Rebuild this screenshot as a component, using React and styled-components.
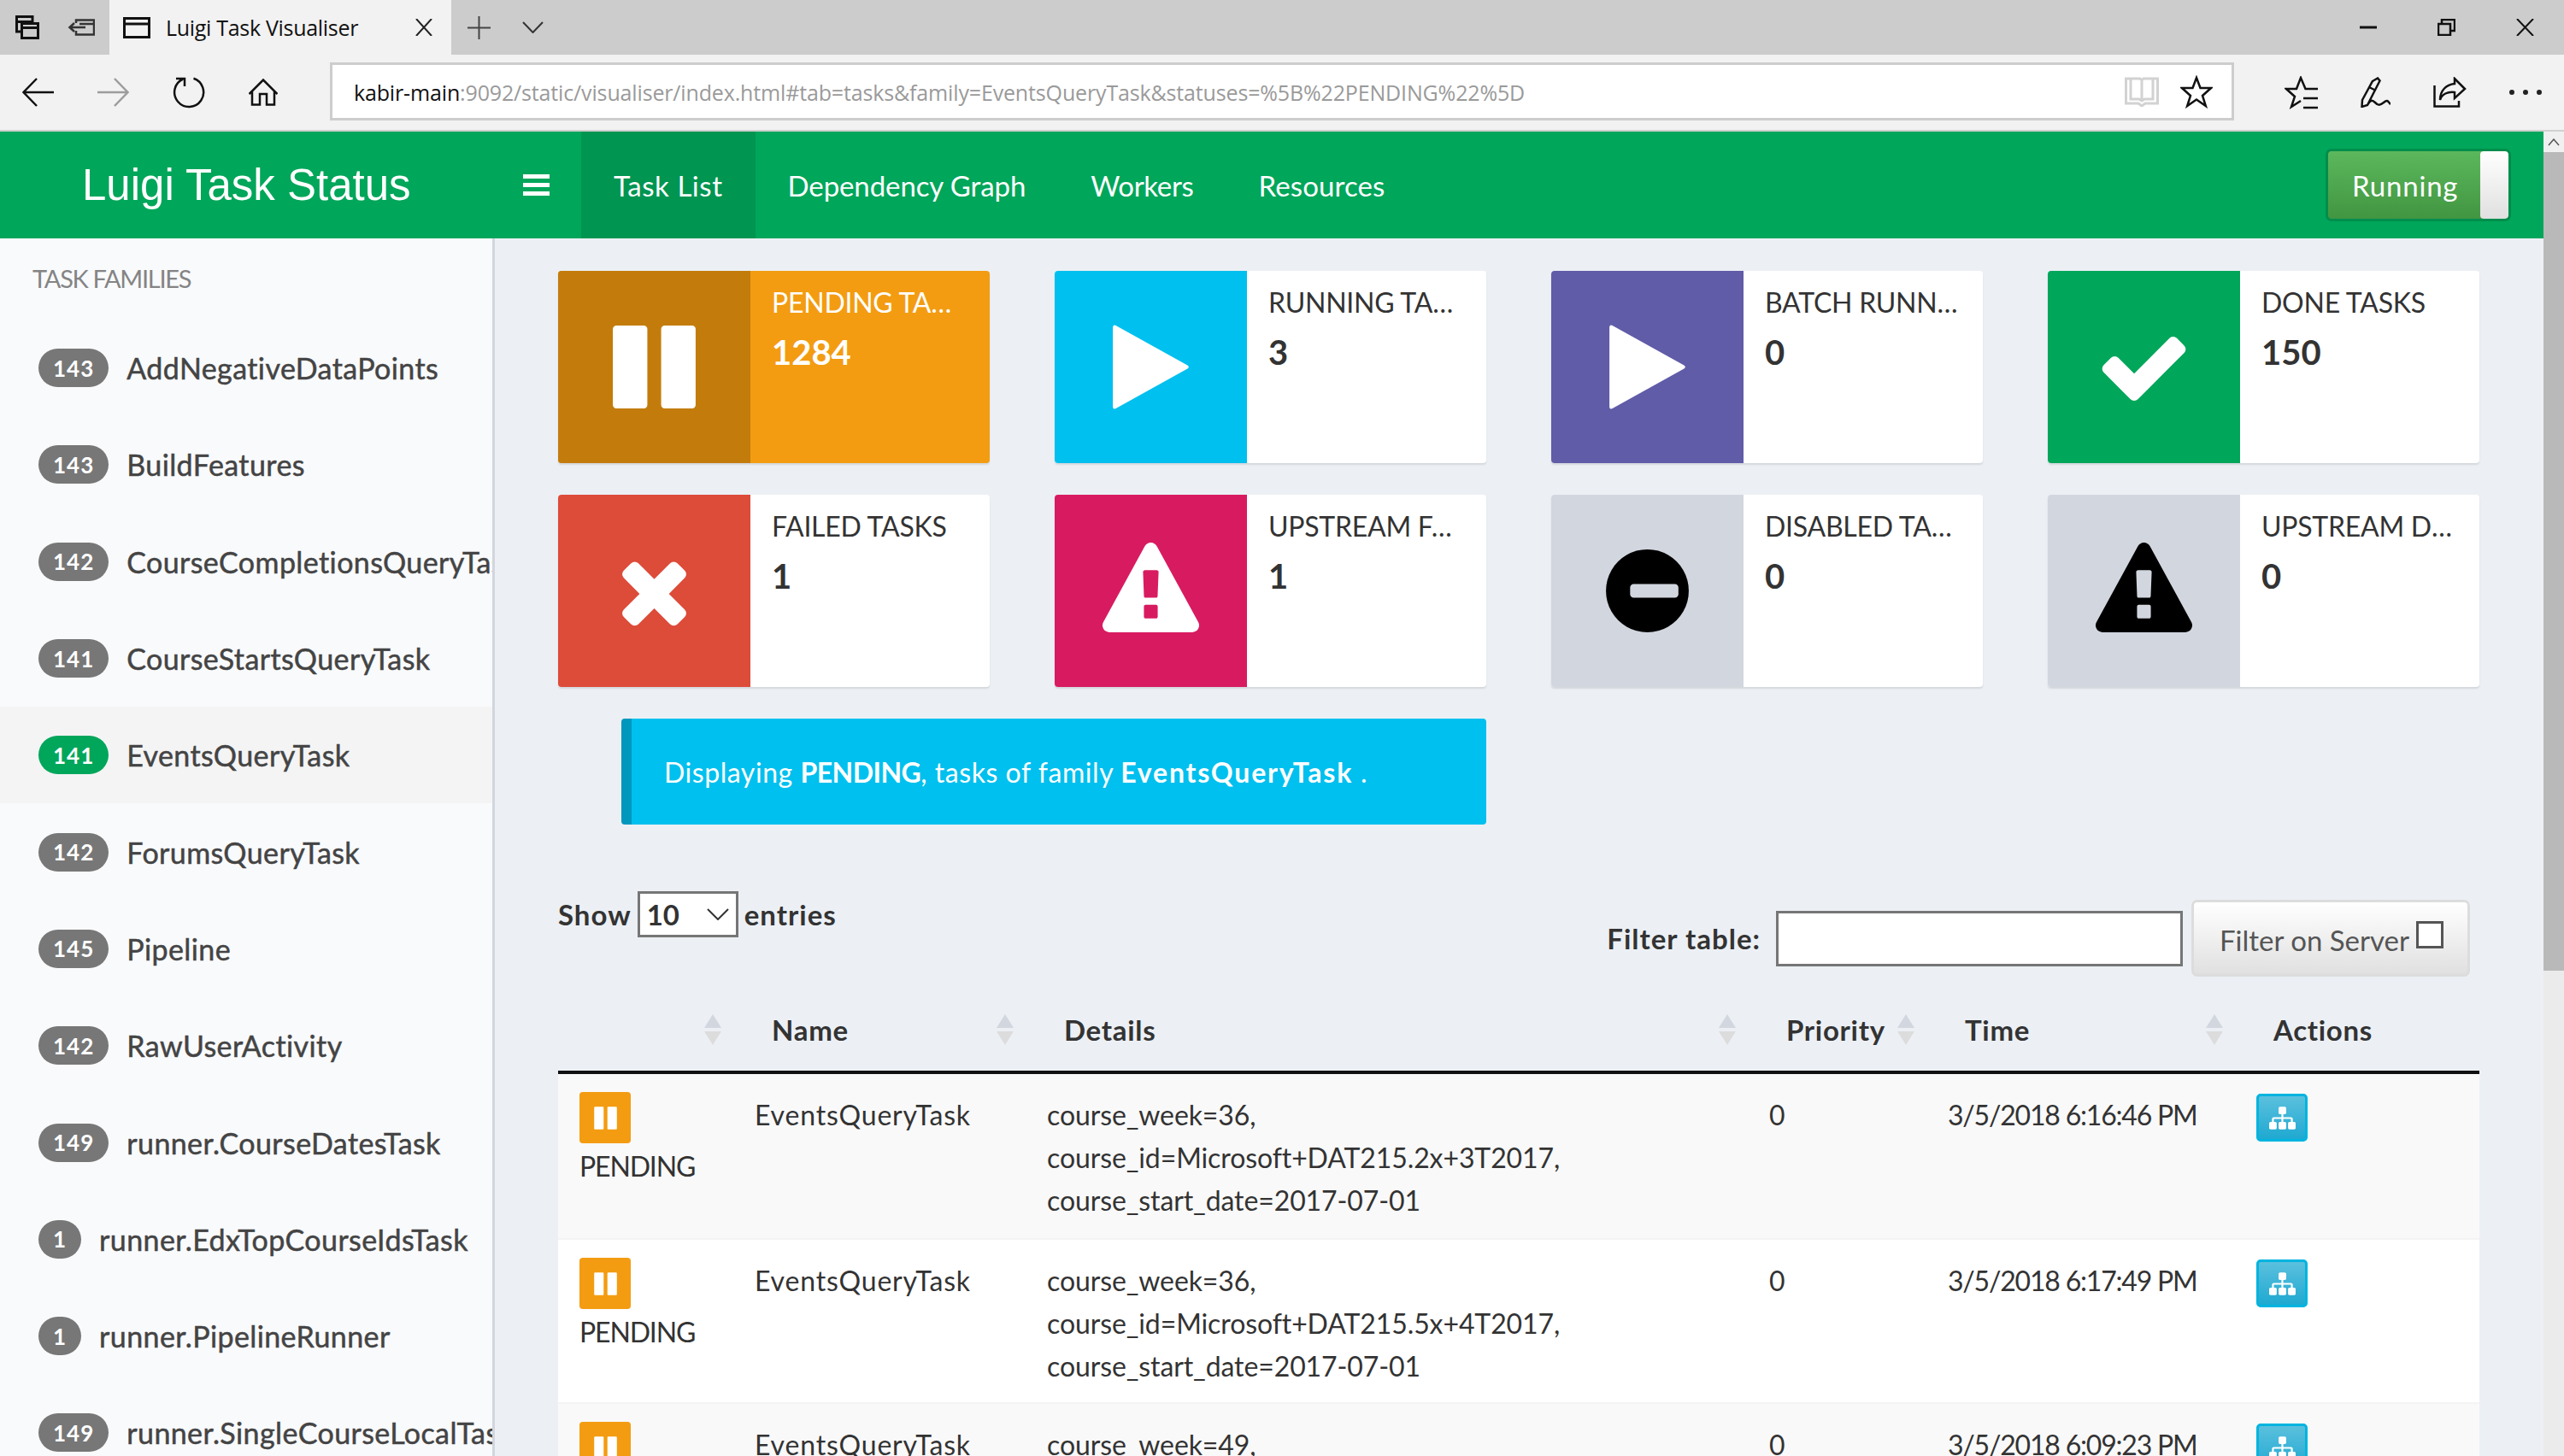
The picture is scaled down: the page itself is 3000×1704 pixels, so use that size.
import styled, { createGlobalStyle } from "styled-components";

const GlobalStyle = createGlobalStyle`
  html, body {
    margin: 0;
    padding: 0;
    background: #ecf0f5;
    overflow: hidden;
  }
  * { box-sizing: border-box; }
`;

const Page = styled.div`
  width: 3000px;
  height: 1704px;
  overflow: hidden;
  display: flex;
  flex-direction: column;
  font-family: "Lato", "Noto Sans", sans-serif;
  color: #333;
`;

/* browser chrome */
const TabStrip = styled.div`
  height: 64px;
  background: #cccccc;
  display: flex;
  align-items: center;
  flex: none;
`;

const StripIcons = styled.div`
  width: 128px;
  display: flex;
  align-items: center;
  gap: 33px;
  padding-left: 18px;
`;

const Tab = styled.div`
  width: 400px;
  height: 64px;
  background: #f2f2f2;
  display: flex;
  align-items: center;
  padding: 0 22px 0 16px;
  font-family: "Open Sans", sans-serif;
  font-size: 25px;
  letter-spacing: -0.3px;
  color: #111;
`;

const TabTitle = styled.span`
  margin-left: 18px;
  flex: 1;
`;

const NewTabIcons = styled.div`
  display: flex;
  align-items: center;
  gap: 37px;
  margin-left: 19px;
`;

const WindowButtons = styled.div`
  margin-left: auto;
  display: flex;
  align-items: center;
  gap: 71px;
  padding-right: 35px;
`;

const Toolbar = styled.div`
  height: 90px;
  flex: none;
  background: #f2f2f2;
  border-bottom: 2px solid #d0d0d0;
  display: flex;
  align-items: center;
`;

const ToolButtons = styled.div`
  width: 386px;
  display: flex;
  align-items: center;
  gap: 51px;
  padding-left: 26px;
`;

const AddressBar = styled.div`
  width: 2228px;
  height: 68px;
  margin-bottom: 2px;
  background: #fff;
  border: 3px solid #cdcdcd;
  display: flex;
  align-items: center;
  padding: 0 22px 0 25px;
  font-family: "Open Sans", sans-serif;
  font-size: 25px;
  letter-spacing: -0.15px;
  color: #9a9a9a;
  gap: 25px;
`;

const Url = styled.div`
  flex: 1;
  padding-top: 2px;
  white-space: nowrap;
  overflow: hidden;

  b {
    font-weight: 400;
    color: #111;
  }
`;

const ActionButtons = styled.div`
  display: flex;
  align-items: center;
  gap: 50px;
  padding-left: 59px;
`;

/* app frame */
const Frame = styled.div`
  flex: 1;
  min-height: 0;
  display: flex;
`;

const Viewport = styled.div`
  flex: 1;
  min-width: 0;
  display: flex;
  flex-direction: column;
`;

const NavBar = styled.header`
  height: 125px;
  flex: none;
  background: #00a65a;
  display: flex;
  align-items: stretch;
  color: #fff;
`;

const Brand = styled.div`
  width: 612px;
  padding-left: 96px;
  display: flex;
  align-items: center;
  font-family: "Liberation Sans", Arial, sans-serif;
  font-size: 51px;
`;

const Burger = styled.div`
  width: 68px;
  display: flex;
  align-items: center;
`;

const NavLink = styled.a`
  display: flex;
  align-items: center;
  padding: 0 38px;
  font-size: 33px;
  letter-spacing: ${(p) => p.$track}px;
  background: ${(p) => (p.$active ? "#009551" : "transparent")};
`;

const Switch = styled.div`
  margin: 20px 38px 0 auto;
  width: 217px;
  height: 85px;
  border: 3px solid #008d4c;
  border-radius: 7px;
  background: linear-gradient(#5cb85c, #419641);
  display: flex;
  align-items: center;
  justify-content: space-between;
  font-size: 33px;
  letter-spacing: 0.8px;
  padding-left: 28px;
  overflow: hidden;
`;

const SwitchHandle = styled.span`
  width: 33px;
  height: 100%;
  border-radius: 4px;
  background: linear-gradient(#fff, #e0e0e0);
`;

const Body = styled.div`
  flex: 1;
  min-height: 0;
  display: flex;
`;

const Sidebar = styled.aside`
  width: 579px;
  flex: none;
  background: #f9fafc;
  border-right: 3px solid #d2d6de;
  overflow: hidden;
  padding-top: 36px;
`;

const SideLabel = styled.div`
  height: 59px;
  padding-left: 38px;
  line-height: 22px;
  font-size: 29px;
  letter-spacing: -1.3px;
  color: #848484;
`;

const FamilyRow = styled.div`
  height: 113.3px;
  display: flex;
  align-items: center;
  gap: 21px;
  padding-left: 45px;
  background: ${(p) => (p.$active ? "#f4f4f5" : "transparent")};
  white-space: nowrap;
  font-size: 34px;
  letter-spacing: 0.4px;
  color: #444;
  -webkit-text-stroke: 0.5px #444;
`;

const Badge = styled.span`
  flex: none;
  min-width: 50px;
  height: 45px;
  padding: 0 17px;
  border-radius: 23px;
  background: ${(p) => (p.$active ? "#00a65a" : "#777")};
  color: #fff;
  font-size: 26px;
  font-weight: 700;
  letter-spacing: 1px;
  -webkit-text-stroke: 0;
  display: flex;
  align-items: center;
  justify-content: center;
`;

const Main = styled.main`
  flex: 1;
  min-width: 0;
  background: #ecf0f5;
  padding: 38px 75px 0 74px;
  overflow: hidden;
`;

const BoxGrid = styled.div`
  display: grid;
  grid-template-columns: repeat(4, 505px);
  column-gap: 76px;
  row-gap: 37px;
`;

const InfoBox = styled.div`
  height: 225px;
  display: flex;
  border-radius: 4px;
  overflow: hidden;
  background: ${(p) => p.$bg || "#fff"};
  color: ${(p) => p.$fg || "#333"};
  box-shadow: 0 2px 2px rgba(0, 0, 0, 0.1);
`;

const BoxIcon = styled.div`
  width: 225px;
  flex: none;
  background: ${(p) => p.$bg};
  color: ${(p) => p.$fg};
  display: flex;
  align-items: center;
  justify-content: center;
`;

const BoxBody = styled.div`
  flex: 1;
  min-width: 0;
  padding: 16px 28px 0 25px;
`;

const BoxTitle = styled.div`
  font-size: 32px;
  line-height: 42px;
  letter-spacing: -0.25px;
  white-space: nowrap;
  overflow: hidden;
  text-overflow: ellipsis;
`;

const BoxValue = styled.div`
  margin-top: 12px;
  font-size: 40px;
  line-height: 50px;
  font-weight: 700;
`;

const Alert = styled.div`
  grid-column: 1 / span 2;
  margin-left: 74px;
  height: 124px;
  border-left: 12px solid #0097bc;
  border-radius: 4px;
  background: #00c0ef;
  color: #fff;
  padding-left: 38px;
  display: flex;
  align-items: center;
  font-size: 32px;
  letter-spacing: 0.55px;
  white-space: pre;
`;

const Strong = styled.b`
  font-weight: 700;
  letter-spacing: ${(p) => p.$track}px;
`;

const Controls = styled.div`
  margin-top: 78px;
  display: flex;
  justify-content: space-between;
  align-items: flex-start;
`;

const Length = styled.label`
  display: flex;
  align-items: center;
  gap: 7px;
  font-size: 33px;
  font-weight: 700;
  letter-spacing: 1px;
`;

const SelectBox = styled.div`
  width: 118px;
  height: 54px;
  background: #fff;
  border: 3px solid #767676;
  display: flex;
  align-items: center;
  justify-content: space-between;
  padding: 0 8px;
  letter-spacing: 0;
`;

const FilterArea = styled.div`
  margin-top: 10px;
  padding-right: 11px;
  display: flex;
  align-items: center;
`;

const FilterLabel = styled.label`
  font-size: 33px;
  font-weight: 700;
  letter-spacing: 1px;
  margin-right: 18px;
`;

const FilterInput = styled.input`
  width: 476px;
  height: 65px;
  background: #fff;
  border: 3px solid #767676;
  margin-right: 10px;
`;

const FilterButton = styled.div`
  width: 326px;
  height: 90px;
  border: 3px solid #dcdcdc;
  border-radius: 7px;
  background: linear-gradient(#fff, #e0e0e0);
  color: #555;
  font-size: 33px;
  letter-spacing: 0;
  display: flex;
  align-items: center;
  padding: 3px 0 0 30px;
  gap: 8px;
`;

const CheckBox = styled.span`
  width: 32px;
  height: 32px;
  margin-top: -12px;
  background: #fff;
  border: 3px solid #555;
`;

const columns = "205px 342px 845px 209px 361px 286px";

const HeadRow = styled.div`
  display: grid;
  grid-template-columns: ${columns};
  height: 114px;
  padding-top: 14px;
  align-items: center;
  border-bottom: 4px solid #111;
`;

const HeadCell = styled.div`
  display: flex;
  align-items: center;
  justify-content: space-between;
  padding: 0 14px 0 45px;
  font-size: 33px;
  font-weight: 700;
  letter-spacing: 0.7px;
`;

const Row = styled.div`
  display: grid;
  grid-template-columns: ${columns};
  height: ${(p) => (p.$odd ? "194px" : "192px")};
  background: ${(p) => (p.$odd ? "#f9f9f9" : "#fff")};
  border-bottom: 2px solid #f4f4f4;
  font-size: 32px;
  line-height: 50px;
`;

const Cell = styled.div`
  padding: 23px 25px 0;
  letter-spacing: ${(p) => p.$track ?? 0}px;
  white-space: nowrap;
`;

const StatusIcon = styled.div`
  width: 60px;
  height: 60px;
  margin-bottom: 2px;
  border-radius: 4px;
  background: #f39c12;
  color: #fff;
  display: flex;
  align-items: center;
  justify-content: center;
`;

const StatusCell = styled.div`
  padding: 21px 25px 0;
  letter-spacing: -1.15px;
`;

const DepButton = styled.div`
  width: 60px;
  height: 56px;
  border: 3px solid #00b4df;
  border-radius: 5px;
  background: linear-gradient(#5bc0de, #1fa9d1);
  color: #fff;
  display: flex;
  align-items: center;
  justify-content: center;
`;

const Scrollbar = styled.div`
  width: 24px;
  flex: none;
  background: #ebebeb;
  display: flex;
  flex-direction: column;
`;

const ScrollUp = styled.div`
  height: 24px;
  background: #f0f0f0;
  display: flex;
  align-items: center;
  justify-content: center;
`;

const ScrollThumb = styled.div`
  height: 958px;
  background: #b9b9b9;
`;

/* Font Awesome 4 style glyphs, 1792 grid */
const glyphs = {
  pause:
    "M1664 192v1408q0 26-19 45t-45 19h-512q-26 0-45-19t-19-45v-1408q0-26 19-45t45-19h512q26 0 45 19t19 45zm-896 0v1408q0 26-19 45t-45 19h-512q-26 0-45-19t-19-45v-1408q0-26 19-45t45-19h512q26 0 45 19t19 45z",
  play: "M1576 927l-1328 738q-23 13-39.5 3t-16.5-36v-1472q0-26 16.5-36t39.5 3l1328 738q23 13 23 31t-23 31z",
  check:
    "M1671 566q0 40-28 68l-724 724-136 136q-28 28-68 28t-68-28l-136-136-362-362q-28-28-28-68t28-68l136-136q28-28 68-28t68 28l294 295 656-657q28-28 68-28t68 28l136 136q28 28 28 68z",
  times:
    "M1298 1232q0 40-28 68l-136 136q-28 28-68 28t-68-28l-294-294-294 294q-28 28-68 28t-68-28l-136-136q-28-28-28-68t28-68l294-294-294-294q-28-28-28-68t28-68l136-136q28-28 68-28t68 28l294 294 294-294q28-28 68-28t68 28l136 136q28 28 28 68t-28 68l-294 294 294 294q28 28 28 68z",
  warning:
    "M1024 1375v-190q0-14-9.5-23.5t-22.5-9.5h-192q-13 0-22.5 9.5t-9.5 23.5v190q0 14 9.5 23.5t22.5 9.5h192q13 0 22.5-9.5t9.5-23.5zm-2-374l18-459q0-12-10-19-13-11-24-11h-220q-11 0-24 11-10 7-10 21l17 457q0 10 10 16.5t24 6.5h185q14 0 23.5-6.5t10.5-16.5zm-14-934l768 1408q35 63-2 126-17 29-46.5 46t-63.5 17h-1536q-34 0-63.5-17t-46.5-46q-37-63-2-126l768-1408q17-31 47-49t65-18 65 18 47 49z",
  minus:
    "M1344 960v-128q0-26-19-45t-45-19h-768q-26 0-45 19t-19 45v128q0 26 19 45t45 19h768q26 0 45-19t19-45zm192-64q0 209-103 385.5t-279.5 279.5-385.5 103-385.5-103-279.5-279.5-103-385.5 103-385.5 279.5-279.5 385.5-103 385.5 103 279.5 279.5 103 385.5z",
  sitemap:
    "M1792 1248v320q0 40-28 68t-68 28h-320q-40 0-68-28t-28-68v-320q0-40 28-68t68-28h96v-192h-512v192h96q40 0 68 28t28 68v320q0 40-28 68t-68 28h-320q-40 0-68-28t-28-68v-320q0-40 28-68t68-28h96v-192h-512v192h96q40 0 68 28t28 68v320q0 40-28 68t-68 28h-320q-40 0-68-28t-28-68v-320q0-40 28-68t68-28h96v-192q0-52 38-90t90-38h512v-192h-96q-40 0-68-28t-28-68v-320q0-40 28-68t68-28h320q40 0 68 28t28 68v320q0 40-28 68t-68 28h-96v192h512q52 0 90 38t38 90v192h96q40 0 68 28t28 68z",
};

const viewBoxes = { times: "-192 -80 1792 1792", minus: "-128 0 1792 1792" };

function Glyph({ name, size = 113 }) {
  return (
    <svg width={size} height={size} viewBox={viewBoxes[name] || "0 0 1792 1792"} fill="currentColor">
      <path d={glyphs[name]} />
    </svg>
  );
}

/* thin-line browser icon */
function Line({ w, h, color = "#111", sw = 2.5, children }) {
  return (
    <svg width={w} height={h} viewBox={`0 0 ${w} ${h}`} fill="none" stroke={color} strokeWidth={sw}>
      {children}
    </svg>
  );
}

const families = [
  [143, "AddNegativeDataPoints"],
  [143, "BuildFeatures"],
  [142, "CourseCompletionsQueryTask"],
  [141, "CourseStartsQueryTask"],
  [141, "EventsQueryTask", true],
  [142, "ForumsQueryTask"],
  [145, "Pipeline"],
  [142, "RawUserActivity"],
  [149, "runner.CourseDatesTask"],
  [1, "runner.EdxTopCourseIdsTask"],
  [1, "runner.PipelineRunner"],
  [149, "runner.SingleCourseLocalTask"],
];

const boxes = [
  { title: "PENDING TASKS", value: 1284, icon: "pause", iconBg: "#c37c0c", iconFg: "#fff", bg: "#f39c12", fg: "#fff" },
  { title: "RUNNING TASKS", value: 3, icon: "play", iconBg: "#00c0ef", iconFg: "#fff" },
  { title: "BATCH RUNNING TASKS", value: 0, icon: "play", iconBg: "#605ca8", iconFg: "#fff" },
  { title: "DONE TASKS", value: 150, icon: "check", iconBg: "#00a65a", iconFg: "#fff" },
  { title: "FAILED TASKS", value: 1, icon: "times", iconBg: "#dd4b39", iconFg: "#fff" },
  { title: "UPSTREAM FAILURE", value: 1, icon: "warning", iconBg: "#d81b60", iconFg: "#fff" },
  { title: "DISABLED TASKS", value: 0, icon: "minus", iconBg: "#d2d6de", iconFg: "#000" },
  { title: "UPSTREAM DISABLED", value: 0, icon: "warning", iconBg: "#d2d6de", iconFg: "#000" },
];

const tasks = [
  {
    details: ["course_week=36,", "course_id=Microsoft+DAT215.2x+3T2017,", "course_start_date=2017-07-01"],
    time: "3/5/2018 6:16:46 PM",
  },
  {
    details: ["course_week=36,", "course_id=Microsoft+DAT215.5x+4T2017,", "course_start_date=2017-07-01"],
    time: "3/5/2018 6:17:49 PM",
  },
  { details: ["course_week=49,"], time: "3/5/2018 6:09:23 PM" },
];

function SortIcon() {
  return (
    <svg width="20" height="36" viewBox="0 0 20 36" fill="#d2d6de">
      <path d="M10 0 20 16H0z" />
      <path d="M0 20h20L10 36z" fill="#dcdcdc" />
    </svg>
  );
}

export default function App() {
  return (
    <Page>
      <GlobalStyle />
      <TabStrip>
        <StripIcons>
          <Line w={28} h={28} sw={3}>
            <path d="M6 19H1.500V1.500H20V8M1.500 7.500H20M7.500 9.500h19v17h-19zM7.500 14.500h19" />
          </Line>
          <Line w={32} h={20} color="#333" sw={2.5}>
            <path d="M10 5V1.500h21v17H10V14M14 6h17M21 10H3M8 5l-5.500 5L8 15" />
          </Line>
        </StripIcons>
        <Tab>
          <Line w={32} h={25} sw={3}>
            <path d="M1.500 1.500h29v22h-29zM1.500 8h29" />
          </Line>
          <TabTitle>Luigi Task Visualiser</TabTitle>
          <Line w={20} h={20} color="#222" sw={2}>
            <path d="M1 0 19 20M19 0 1 20" />
          </Line>
        </Tab>
        <NewTabIcons>
          <Line w={27} h={27} color="#444" sw={2}>
            <path d="M13.500 0v27M0 13.500h27" />
          </Line>
          <Line w={25} h={14} color="#333" sw={2}>
            <path d="M1 1l11.500 12L24 1" />
          </Line>
        </NewTabIcons>
        <WindowButtons>
          <Line w={20} h={20} sw={3}>
            <path d="M0 10h20" />
          </Line>
          <Line w={21} h={20} sw={2.5}>
            <path d="M1 6h14v13H1zM5 6V1h15v13h-5" />
          </Line>
          <Line w={21} h={20} sw={2}>
            <path d="M1 0 20 20M20 0 1 20" />
          </Line>
        </WindowButtons>
      </TabStrip>
      <Toolbar>
        <ToolButtons>
          <Line w={37} h={34} sw={2.5}>
            <path d="M37 17H2M17 1 1.500 17 17 33" />
          </Line>
          <Line w={37} h={34} color="#9c9c9c" sw={2.5}>
            <path d="M0 17h35M20 1l15.500 16L20 33" />
          </Line>
          <Line w={38} h={37} sw={2.5}>
            <path d="M24.500 1.800A17 17 0 1 1 12 2.500M4 2h10v9" />
          </Line>
          <Line w={34} h={32} sw={2.5}>
            <path d="M.5 18 17 1.500 33.500 18M4 15v15.500h9V18h8v12.500h9V15" />
          </Line>
        </ToolButtons>
        <AddressBar>
          <Url>
            <b>kabir-main</b>:9092/static/visualiser/index.html#tab=tasks&amp;family=EventsQueryTask&amp;statuses=%5B%22PENDING%22%5D
          </Url>
          <Line w={40} h={35} color="#d2d2d2" sw={3}>
            <path d="M1.500 2H18l2 2 2-2h16.500v29H24l-4 3-4-3H1.500zM7 2v24h10l3 2 3-2h10V2M20 4v24" />
          </Line>
          <Line w={38} h={39} sw={2.5}>
            <path d="M19 3l4.500 12H36l-10 9 3.800 12L19 28.500 8.200 36 12 24 2 15h12.500z" />
          </Line>
        </AddressBar>
        <ActionButtons>
          <Line w={39} h={39} sw={2.5}>
            <path d="M39 15H24.500L19 2l-5 13H2l10 9-4 12 11-7M22 26h17M22 37h17" />
          </Line>
          <Line w={35} h={36} sw={2.5}>
            <path d="M14 5l6-3.500 2.500 3L8 33l-6.500 2 .5-8zM10 12l6 3M8 33c4-7 6-6 9-3s5 4 10 0 5-1 8 2" />
          </Line>
          <Line w={39} h={36} sw={2.5}>
            <path d="M1.500 10v24.500H30V28M25 2l12 12-12 11v-7C17 17 10 20 8 27 8 16 15 9 25 8z" />
          </Line>
          <Line w={38} h={8} color="#222" sw={0}>
            <circle cx="3" cy="4" r="3" fill="#222" />
            <circle cx="19" cy="4" r="3" fill="#222" />
            <circle cx="35" cy="4" r="3" fill="#222" />
          </Line>
        </ActionButtons>
      </Toolbar>
      <Frame>
        <Viewport>
          <NavBar>
            <Brand>Luigi Task Status</Brand>
            <Burger>
              <svg width="31" height="25" viewBox="0 0 31 25" fill="#fff">
                <path d="M0 0h31v5H0zM0 10h31v5H0zM0 20h31v5H0z" />
              </svg>
            </Burger>
            <NavLink $active $track={0.55}>
              Task List
            </NavLink>
            <NavLink $track={-0.1}>Dependency Graph</NavLink>
            <NavLink $track={-0.3}>Workers</NavLink>
            <NavLink $track={0.1}>Resources</NavLink>
            <Switch>
              Running
              <SwitchHandle />
            </Switch>
          </NavBar>
          <Body>
            <Sidebar>
              <SideLabel>TASK FAMILIES</SideLabel>
              {families.map(([count, name, active]) => (
                <FamilyRow key={name} $active={active}>
                  <Badge $active={active}>{count}</Badge>
                  {name}
                </FamilyRow>
              ))}
            </Sidebar>
            <Main>
              <BoxGrid>
                {boxes.map((b) => (
                  <InfoBox key={b.title} $bg={b.bg} $fg={b.fg}>
                    <BoxIcon $bg={b.iconBg} $fg={b.iconFg}>
                      <Glyph name={b.icon} />
                    </BoxIcon>
                    <BoxBody>
                      <BoxTitle>{b.title}</BoxTitle>
                      <BoxValue>{b.value}</BoxValue>
                    </BoxBody>
                  </InfoBox>
                ))}
                <Alert>
                  Displaying <Strong $track={-0.55}>PENDING</Strong>, tasks of family{" "}
                  <Strong $track={1.8}>EventsQueryTask</Strong> .
                </Alert>
              </BoxGrid>
              <Controls>
                <Length>
                  Show
                  <SelectBox>
                    10
                    <svg width="26" height="14" viewBox="0 0 26 14" fill="none" stroke="#333" strokeWidth="2">
                      <path d="M1 1l12 12L25 1" />
                    </svg>
                  </SelectBox>
                  entries
                </Length>
                <FilterArea>
                  <FilterLabel>Filter table:</FilterLabel>
                  <FilterInput />
                  <FilterButton>
                    Filter on Server
                    <CheckBox />
                  </FilterButton>
                </FilterArea>
              </Controls>
              <HeadRow>
                <HeadCell>
                  <span />
                  <SortIcon />
                </HeadCell>
                <HeadCell>
                  Name
                  <SortIcon />
                </HeadCell>
                <HeadCell>
                  Details
                  <SortIcon />
                </HeadCell>
                <HeadCell>
                  Priority
                  <SortIcon />
                </HeadCell>
                <HeadCell>
                  Time
                  <SortIcon />
                </HeadCell>
                <HeadCell>Actions</HeadCell>
              </HeadRow>
              {tasks.map((t, i) => (
                <Row key={t.time} $odd={i % 2 === 0}>
                  <StatusCell>
                    <StatusIcon>
                      <Glyph name="pause" size={31} />
                    </StatusIcon>
                    PENDING
                  </StatusCell>
                  <Cell $track={0.85}>EventsQueryTask</Cell>
                  <Cell $track={-0.1}>
                    {t.details.map((d) => (
                      <div key={d}>{d}</div>
                    ))}
                  </Cell>
                  <Cell>0</Cell>
                  <Cell $track={-1.2}>{t.time}</Cell>
                  <Cell>
                    <DepButton>
                      <Glyph name="sitemap" size={31} />
                    </DepButton>
                  </Cell>
                </Row>
              ))}
            </Main>
          </Body>
        </Viewport>
        <Scrollbar>
          <ScrollUp>
            <svg width="14" height="9" viewBox="0 0 14 9" fill="none" stroke="#555" strokeWidth="1.5">
              <path d="M1 8l6-7 6 7" />
            </svg>
          </ScrollUp>
          <ScrollThumb />
        </Scrollbar>
      </Frame>
    </Page>
  );
}
